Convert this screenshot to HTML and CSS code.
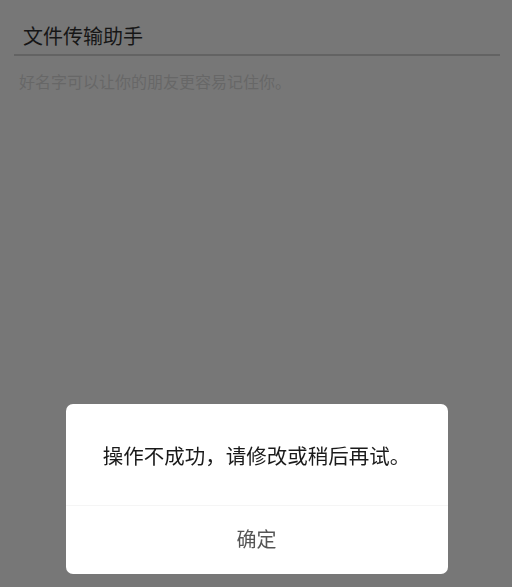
FILE: index.html
```html
<!DOCTYPE html>
<html lang="zh-CN">
<head>
<meta charset="utf-8">
<title>设置备注</title>
<link rel="stylesheet" href="styles.css">
</head>
<body>
<div class="page">
  <div class="field">
    <div class="field-value">文件传输助手</div>
  </div>
  <div class="hint">好名字可以让你的朋友更容易记住你。</div>
</div>
<div class="overlay">
  <div class="dialog">
    <div class="dialog-body">操作不成功，请修改或稍后再试。</div>
    <div class="dialog-actions">
      <div class="dialog-btn">确定</div>
    </div>
  </div>
</div>
</body>
</html>
```

FILE: styles.css
```css
html, body {
  margin: 0;
  padding: 0;
  height: 100%;
}
body {
  background: #777777;
  font-family: "Noto Sans CJK SC", "Noto Sans", sans-serif;
  overflow: hidden;
}
.page {
  padding: 22px 12px 0 14px;
}
.field {
  border-bottom: 2px solid #636363;
  padding: 0 0 4px 9px;
}
.field-value {
  font-size: 20px;
  line-height: 28px;
  color: #161616;
}
.hint {
  margin-top: 13px;
  padding-left: 5px;
  font-size: 16px;
  line-height: 24px;
  color: #676767;
}
.overlay {
  position: fixed;
  inset: 0;
  display: flex;
  flex-direction: column;
  justify-content: flex-end;
  align-items: center;
  padding-bottom: 13px;
}
.dialog {
  width: 382px;
  margin-left: 1px;
  background: #ffffff;
  border-radius: 7px;
  overflow: hidden;
}
.dialog-body {
  height: 102px;
  box-sizing: border-box;
  padding-top: 37px;
  text-align: center;
  font-size: 20.5px;
  line-height: 28px;
  color: #1a1a1a;
  border-bottom: 1px solid #f5f5f5;
}
.dialog-actions {
  height: 68px;
  display: flex;
  align-items: center;
  justify-content: center;
}
.dialog-btn {
  font-size: 20px;
  line-height: 28px;
  color: #555555;
  padding-bottom: 2px;
}
```
